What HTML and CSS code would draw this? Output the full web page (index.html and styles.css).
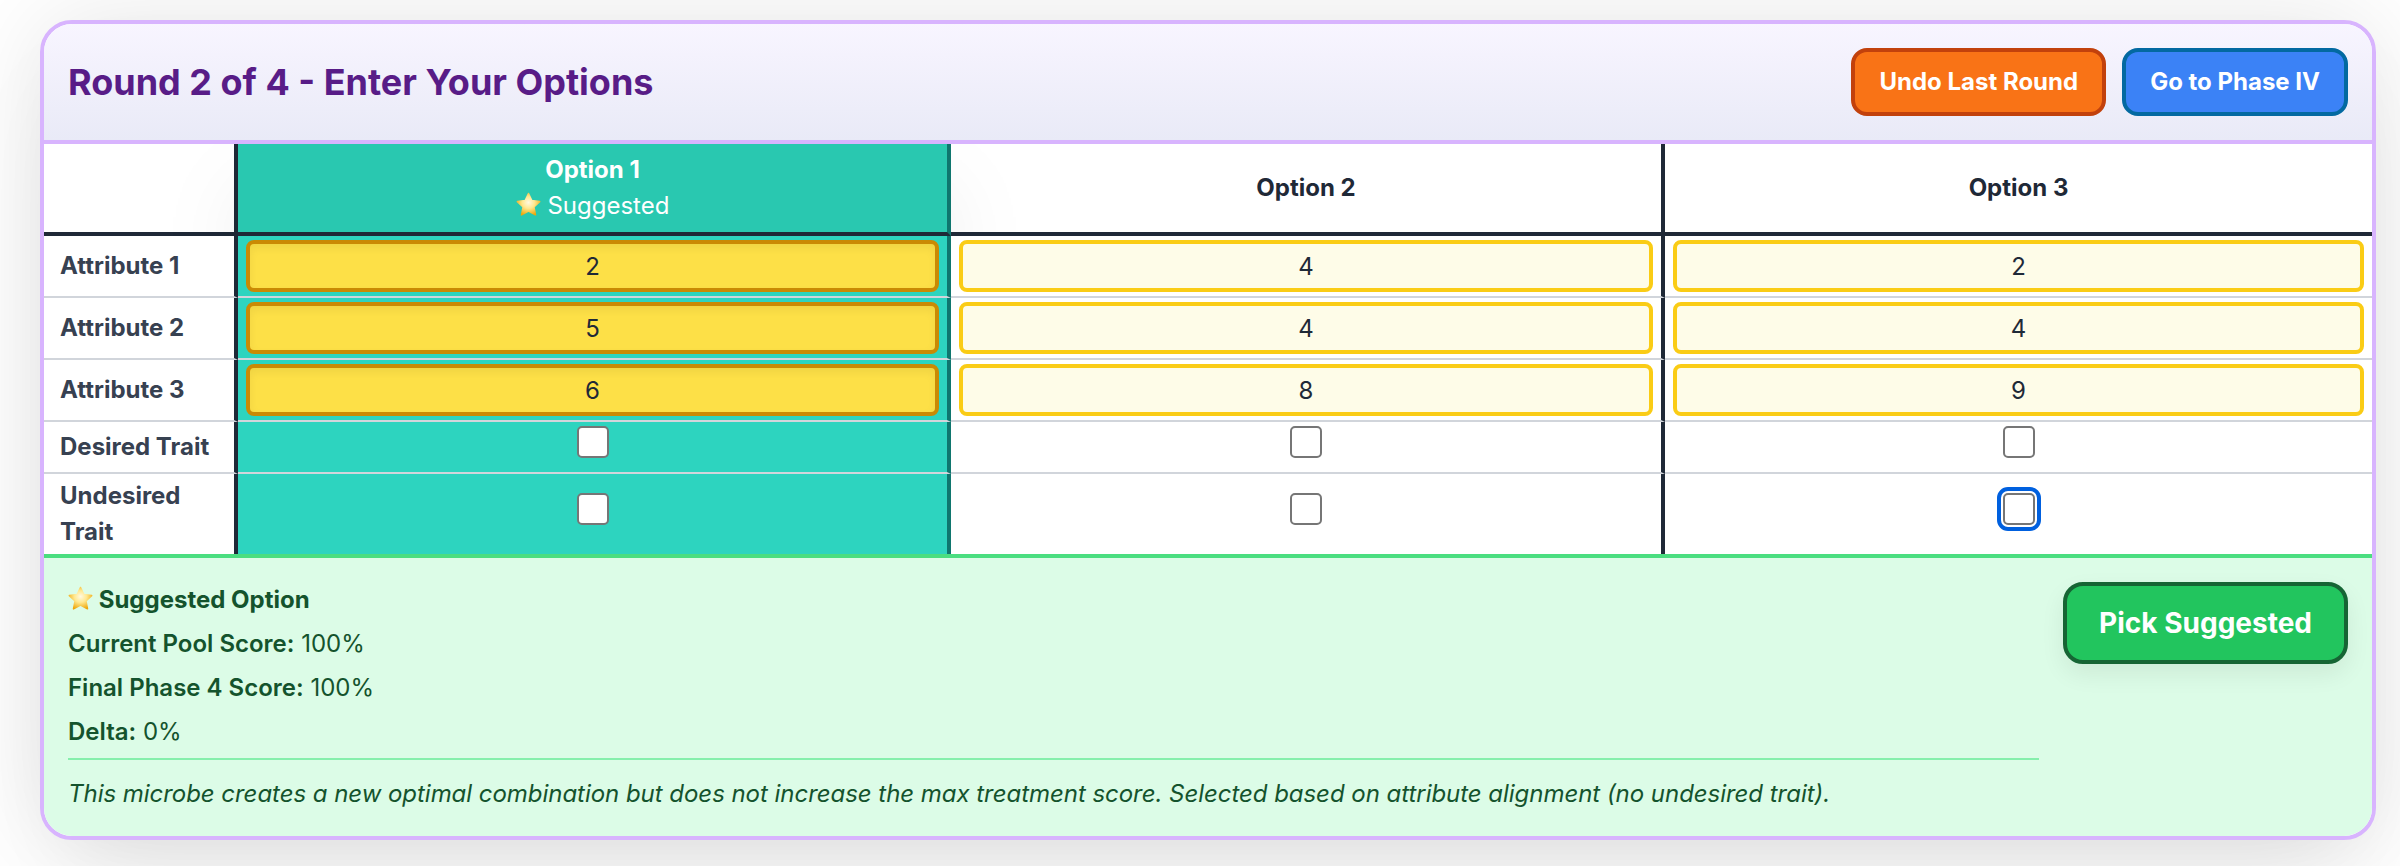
FILE: index.html
```html
<!DOCTYPE html>
<html lang="en">
<head>
    <meta charset="UTF-8">
    <meta name="viewport" content="width=device-width, initial-scale=1.0">
    <title>Round 2 of 4 - Enter Your Options</title>
    <link rel="stylesheet" href="styles.css">
</head>
<body>
    <main class="round-card">
        <div class="round-header">
            <h1 class="round-title">Round 2 of 4 - Enter Your Options</h1>
            <div class="round-actions">
                <button class="button undo">Undo Last Round</button>
                <button class="button phase">Go to Phase IV</button>
            </div>
        </div>

        <table class="options-table">
            <colgroup>
                <col class="col-label">
                <col class="col-first">
                <col class="col-second">
                <col>
            </colgroup>
            <thead>
                <tr>
                    <th class="label-cell"></th>
                    <th class="suggested">
                        Option 1
                        <span class="suggested-tag">
                            <svg class="star" viewBox="0 0 24 24">
                                <defs>
                                    <radialGradient id="star-fill" cx="50%" cy="42%" r="62%">
                                        <stop offset="0%" stop-color="#fff9e0"/>
                                        <stop offset="45%" stop-color="#ffe88f"/>
                                        <stop offset="100%" stop-color="#eea70a"/>
                                    </radialGradient>
                                </defs>
                                <path d="M12 1.5 15.2 8.3 22.7 9.2 17.2 14.4 18.7 21.9 12 18.2 5.3 21.9 6.8 14.4 1.3 9.2 8.8 8.3Z" fill="url(#star-fill)" stroke="url(#star-fill)" stroke-width="1.5" stroke-linejoin="round"/>
                            </svg>
                            Suggested
                        </span>
                    </th>
                    <th class="divided">Option 2</th>
                    <th>Option 3</th>
                </tr>
            </thead>
            <tbody>
                <tr>
                    <td class="label-cell">Attribute 1</td>
                    <td class="suggested"><input type="text" class="value-input picked" value="2"></td>
                    <td class="divided"><input type="text" class="value-input" value="4"></td>
                    <td><input type="text" class="value-input" value="2"></td>
                </tr>
                <tr>
                    <td class="label-cell">Attribute 2</td>
                    <td class="suggested"><input type="text" class="value-input picked" value="5"></td>
                    <td class="divided"><input type="text" class="value-input" value="4"></td>
                    <td><input type="text" class="value-input" value="4"></td>
                </tr>
                <tr>
                    <td class="label-cell">Attribute 3</td>
                    <td class="suggested"><input type="text" class="value-input picked" value="6"></td>
                    <td class="divided"><input type="text" class="value-input" value="8"></td>
                    <td><input type="text" class="value-input" value="9"></td>
                </tr>
                <tr>
                    <td class="label-cell">Desired Trait</td>
                    <td class="suggested"><input type="checkbox" class="trait-check"></td>
                    <td class="divided"><input type="checkbox" class="trait-check"></td>
                    <td><input type="checkbox" class="trait-check"></td>
                </tr>
                <tr class="last-row">
                    <td class="label-cell">Undesired Trait</td>
                    <td class="suggested"><input type="checkbox" class="trait-check"></td>
                    <td class="divided"><input type="checkbox" class="trait-check"></td>
                    <td><input type="checkbox" class="trait-check focused"></td>
                </tr>
            </tbody>
        </table>

        <div class="suggestion">
            <div class="suggestion-info">
                <p class="suggestion-line suggestion-title">
                    <svg class="star" viewBox="0 0 24 24">
                        <path d="M12 1.5 15.2 8.3 22.7 9.2 17.2 14.4 18.7 21.9 12 18.2 5.3 21.9 6.8 14.4 1.3 9.2 8.8 8.3Z" fill="url(#star-fill)" stroke="url(#star-fill)" stroke-width="1.5" stroke-linejoin="round"/>
                    </svg>
                    Suggested Option
                </p>
                <p class="suggestion-line"><strong>Current Pool Score:</strong> 100%</p>
                <p class="suggestion-line"><strong>Final Phase 4 Score:</strong> 100%</p>
                <p class="suggestion-line"><strong>Delta:</strong> 0%</p>
                <p class="suggestion-note">This microbe creates a new optimal combination but does not increase the max treatment score. Selected based on attribute alignment (no undesired trait).</p>
            </div>
            <button class="button pick">Pick Suggested</button>
        </div>
    </main>
</body>
</html>
```

FILE: styles.css
```css
* {
    margin: 0;
    padding: 0;
    box-sizing: border-box;
    font-family: Inter, "Liberation Sans", sans-serif;
}

body {
    background-color: #fff;
    min-height: 100vh;
    padding: 20px 24px 26px 40px;
    font-size: 24px;
    line-height: 36px;
    color: #1f2937;
}

.round-card {
    border: 4px solid #d8b4fe;
    border-radius: 32px;
    overflow: hidden;
    background: #fff;
    box-shadow: 0 50px 100px -24px rgba(0, 0, 0, 0.08), 0 0 100px rgba(0, 0, 0, 0.1);
}

.round-header {
    position: relative;
    display: flex;
    justify-content: space-between;
    align-items: center;
    padding: 24px;
    background: linear-gradient(to bottom, #f8f5ff, #e9eaf7);
    border-bottom: 4px solid #d8b4fe;
}

.round-title {
    font-size: 36px;
    line-height: 48px;
    font-weight: 700;
    color: #581c87;
}

.round-actions {
    display: flex;
    gap: 16px;
}

.button {
    padding: 12px 24px;
    border: 4px solid;
    border-radius: 16px;
    color: #fff;
    font-size: 24px;
    line-height: 36px;
    font-weight: 700;
    cursor: pointer;
}

.button.undo {
    background: #f97316;
    border-color: #c2410c;
}

.button.phase {
    background: #3b82f6;
    border-color: #0369a1;
}

.button.pick {
    flex-shrink: 0;
    align-self: flex-start;
    padding: 16px 32px;
    background: #22c55e;
    border-color: #166534;
    border-radius: 20px;
    font-size: 28px;
    line-height: 42px;
    box-shadow: 0 10px 24px rgba(0, 0, 0, 0.07);
}

.options-table {
    width: 100%;
    table-layout: fixed;
    border-collapse: separate;
    border-spacing: 0;
    background: #fff;
}

.col-label {
    width: 194px;
}

.col-first {
    width: 713px;
}

.col-second {
    width: 714px;
}

.options-table th {
    padding: 8px;
    font-weight: 650;
    text-align: center;
    border-bottom: 4px solid #1f2937;
}

.options-table td {
    padding: 4px 8px;
    text-align: center;
    background: #fff;
    border-bottom: 2px solid #d1d5db;
}

.options-table .last-row td {
    border-bottom: none;
}

.options-table .label-cell {
    padding-left: 16px;
    padding-right: 16px;
    text-align: left;
    font-weight: 650;
    color: #374151;
    border-right: 4px solid #1f2937;
}

.options-table .divided {
    border-right: 4px solid #1f2937;
}

.options-table .suggested {
    color: #fff;
    background: #2dd4bf;
    border-right: 4px solid #0f766e;
}

.options-table th.suggested {
    background: #29c8b0;
    box-shadow: 0 50px 100px -24px rgba(0, 0, 0, 0.25);
}

.suggested-tag {
    display: block;
    font-weight: 400;
}

.star {
    display: inline-block;
    width: 25px;
    height: 25px;
    vertical-align: -3px;
}

.value-input {
    display: block;
    width: 100%;
    height: 52px;
    border: 4px solid #facc15;
    border-radius: 8px;
    background: #fefce8;
    color: #1f2937;
    font-size: 24px;
    text-align: center;
    outline: none;
}

.value-input.picked {
    background: #fde047;
    border-color: #ca8a04;
    box-shadow: inset 0 4px 8px rgba(0, 0, 0, 0.06);
}

.trait-check {
    display: block;
    width: 32px;
    height: 32px;
    margin: 0 auto 10px;
    appearance: none;
    background: #fff;
    border: 2px solid #767676;
    border-radius: 5px;
}

.trait-check.focused {
    outline: 4px solid #0060df;
    outline-offset: 2px;
}

.suggestion {
    display: flex;
    gap: 24px;
    padding: 24px;
    background: #dcfce7;
    border-top: 4px solid #4ade80;
    color: #14532d;
}

.suggestion-info {
    flex: 1;
}

.suggestion-line {
    margin-bottom: 8px;
}

.suggestion-line strong {
    font-weight: 600;
}

.suggestion-title {
    font-weight: 650;
}

.suggestion-note {
    padding-top: 16px;
    border-top: 2px solid #86efac;
    font-style: italic;
    letter-spacing: -0.04px;
}
```
